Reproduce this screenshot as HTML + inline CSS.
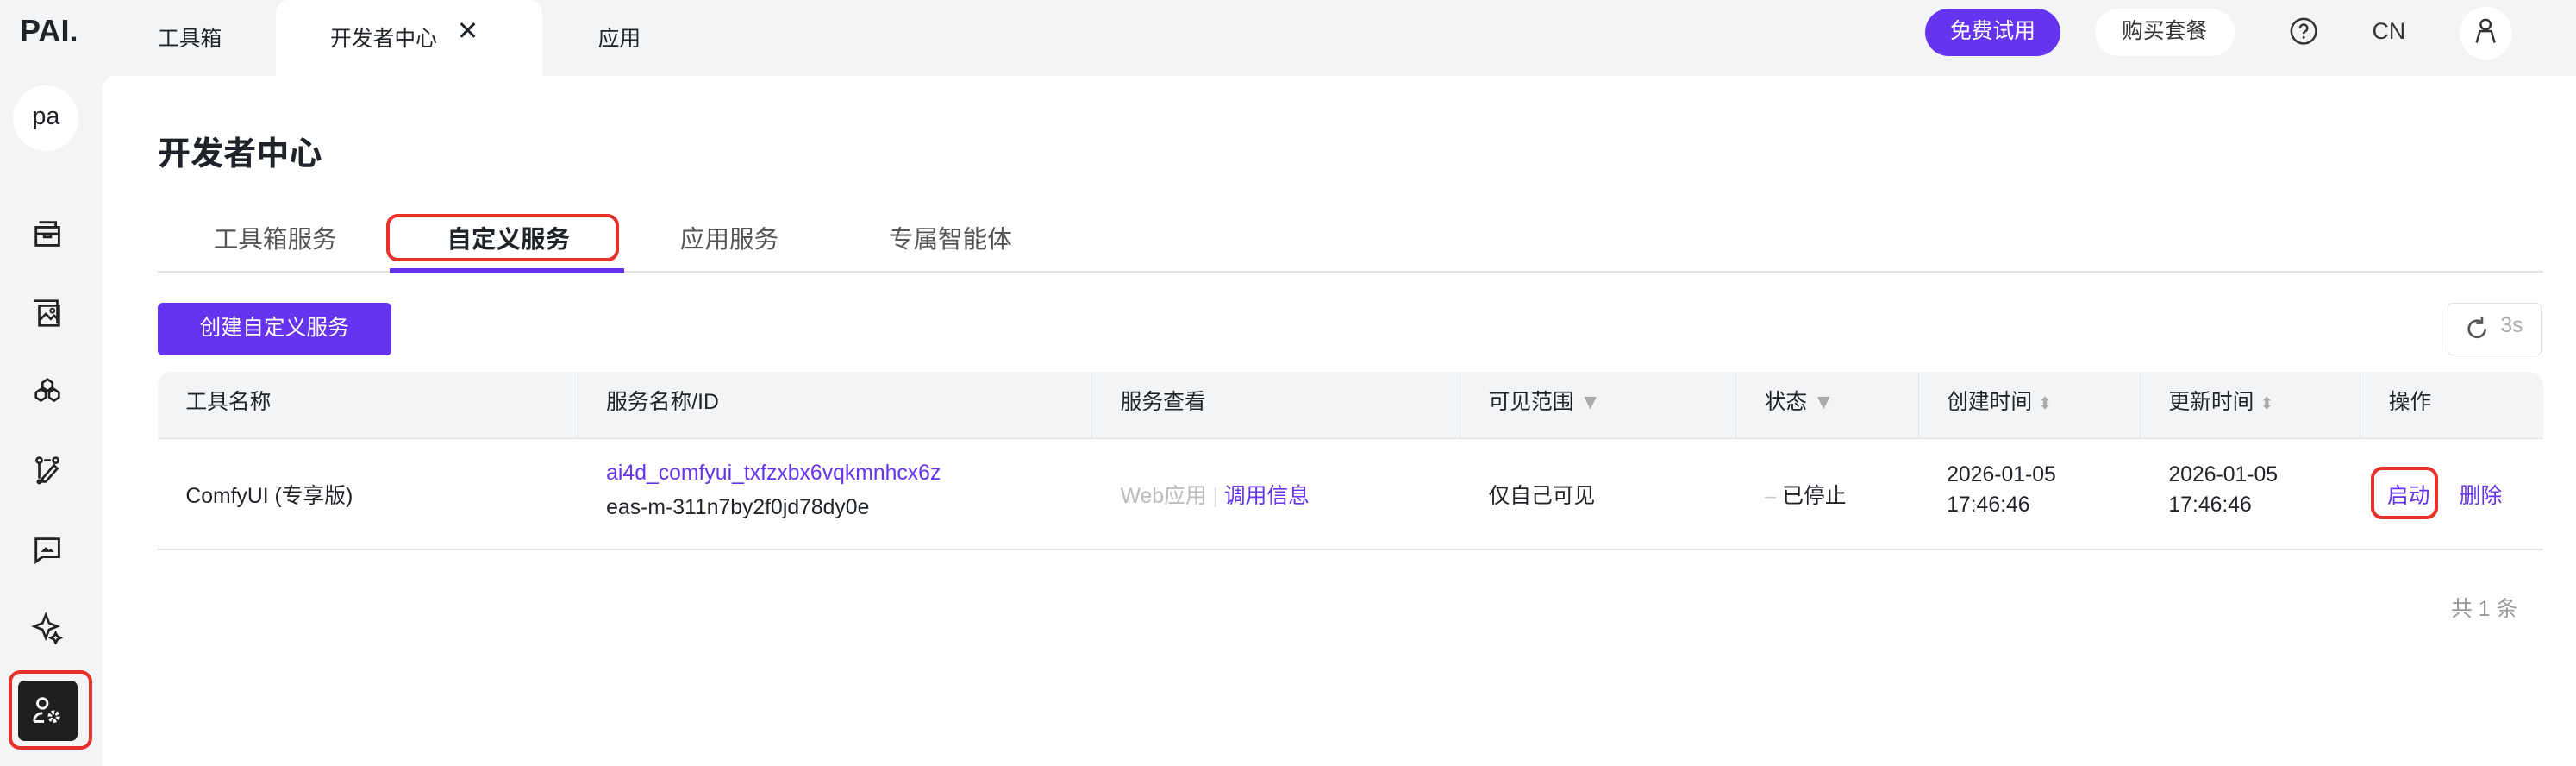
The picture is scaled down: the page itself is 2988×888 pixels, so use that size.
<!DOCTYPE html>
<html><head><meta charset="utf-8"><style>
*{margin:0;padding:0;box-sizing:border-box}
html,body{width:2988px;height:888px;overflow:hidden;background:#f3f4f6}
#w{zoom:1.9056;width:1568px;height:466px;position:relative;font-family:"Liberation Sans","Noto Sans CJK SC",sans-serif;color:#1f2329;font-size:13px}
.a{position:absolute;white-space:nowrap}
.main{position:absolute;left:62px;top:46px;right:0;bottom:0;background:#fff;border-top-left-radius:8px}
.ic{position:absolute;left:19px;width:20px;height:20px}
.th{position:absolute;top:226px;height:41px;line-height:38px;font-size:13px;color:#1f2329;padding-left:17px;border-right:1px solid #dde4ee}
.td{position:absolute;font-size:13px}
.pu{color:#6633ee}
</style></head><body><div id="w">
<div class="a" style="left:12px;top:8px;font-size:19px;font-weight:bold;color:#1f2329">PAI.</div>
<div class="a" style="left:96px;top:13px;font-size:13px">工具箱</div>
<div class="a" style="left:168px;top:0;width:162px;height:47px;background:#fff;border-radius:8px 8px 0 0"></div>
<div class="a" style="left:201px;top:13px">开发者中心</div>
<div class="a" style="left:278px;top:10px;font-size:16px">✕</div>
<div class="a" style="left:364px;top:13px">应用</div>
<div class="a" style="left:1172px;top:5px;width:82px;height:29px;border-radius:15px;background:#6633ee;color:#fff;text-align:center;line-height:28px">免费试用</div>
<div class="a" style="left:1275px;top:5px;width:85px;height:29px;border-radius:15px;background:#fff;text-align:center;line-height:28px;color:#333">购买套餐</div>
<svg class="a" style="left:1393px;top:10px" width="18" height="18" viewBox="0 0 18 18"><circle cx="9" cy="9" r="7.5" fill="none" stroke="#333" stroke-width="1.3"/><path d="M6.8 7.2a2.2 2.2 0 1 1 3 2c-.6.3-.8.7-.8 1.3" fill="none" stroke="#333" stroke-width="1.3"/><circle cx="9" cy="12.8" r=".8" fill="#333"/></svg>
<div class="a" style="left:1444px;top:11px;font-size:14px;color:#333">CN</div>
<div class="a" style="left:1497px;top:4px;width:32px;height:32px;border-radius:50%;background:#fff"></div>
<svg class="a" style="left:1504px;top:10px" width="18" height="18" viewBox="0 0 18 18"><circle cx="9" cy="5" r="3" fill="none" stroke="#333" stroke-width="1.3"/><path d="M3.5 16l2-7h7l2 7" fill="none" stroke="#333" stroke-width="1.3"/></svg>

<div class="a" style="left:8px;top:52px;width:40px;height:40px;border-radius:50%;background:#fff;text-align:center;line-height:38px;font-size:15px">pa</div>
<svg class="ic" style="top:132px" viewBox="0 0 20 20"><path d="M3 6h14v11H3zM5 3h10v3M3 10h14M8 10v2h4v-2" fill="none" stroke="#222" stroke-width="1.5"/></svg>
<svg class="ic" style="top:180px" viewBox="0 0 20 20"><path d="M2 3h14v14M5 6h12v12H5zM5 15l4-4 3 3 2-2 3 3" fill="none" stroke="#222" stroke-width="1.4"/><circle cx="13" cy="9" r="1.3" fill="none" stroke="#222"/></svg>
<svg class="ic" style="top:228px" viewBox="0 0 20 20"><path d="M10 3l3 2v3l-3 2-3-2V5zM6 9l3 2v3l-3 2-3-2v-3zM14 9l3 2v3l-3 2-3-2v-3z" fill="none" stroke="#222" stroke-width="1.4"/></svg>
<svg class="ic" style="top:276px" viewBox="0 0 20 20"><circle cx="5" cy="4" r="1.6" fill="none" stroke="#222" stroke-width="1.4"/><circle cx="5" cy="17" r="1.6" fill="#222"/><circle cx="15" cy="4" r="1.6" fill="none" stroke="#222" stroke-width="1.4"/><path d="M5 6v9M8 4h4M9 17l7-8-2-2-7 8v2z" fill="none" stroke="#222" stroke-width="1.4"/></svg>
<svg class="ic" style="top:324px" viewBox="0 0 20 20"><path d="M3 4h14v11H7l-4 3z" fill="none" stroke="#222" stroke-width="1.5"/><path d="M6 12l3-3 2 2 1-1 2 2z" fill="#222"/></svg>
<svg class="ic" style="top:372px" viewBox="0 0 20 20"><path d="M9 2l2 5 5 2-5 2-2 5-2-5-5-2 5-2zM15 13l1 2 2 1-2 1-1 2-1-2-2-1 2-1z" fill="none" stroke="#222" stroke-width="1.4"/></svg>
<div class="a" style="left:5px;top:408px;width:51px;height:48px;border:2.5px solid #e8302a;border-radius:7px"></div>
<div class="a" style="left:11px;top:414px;width:36px;height:37px;background:#1f1f1f;border-radius:4px"></div>
<svg class="a" style="left:18px;top:422px" width="22" height="22" viewBox="0 0 22 22"><circle cx="8" cy="6" r="3" fill="none" stroke="#fff" stroke-width="1.5"/><path d="M3 17c0-3 2-5 5-5M3 17h6" fill="none" stroke="#fff" stroke-width="1.5"/><circle cx="15" cy="14" r="2.5" fill="none" stroke="#fff" stroke-width="2.5" stroke-dasharray="1.6 1"/><circle cx="15" cy="14" r="1" fill="#1f1f1f"/></svg>

<div class="main"></div>
<div class="a" style="left:96px;top:77px;font-size:20px;font-weight:bold">开发者中心</div>
<div class="a" style="left:130px;top:134px;font-size:15px;color:#555">工具箱服务</div>
<div class="a" style="left:272px;top:134px;font-size:15px;font-weight:bold">自定义服务</div>
<div class="a" style="left:414px;top:134px;font-size:15px;color:#555">应用服务</div>
<div class="a" style="left:541px;top:134px;font-size:15px;color:#555">专属智能体</div>
<div class="a" style="left:96px;top:165px;width:1452px;height:1px;background:#dfe1e6"></div>
<div class="a" style="left:237px;top:163px;width:143px;height:3px;background:#6633ee"></div>
<div class="a" style="left:235px;top:130px;width:142px;height:29px;border:2.5px solid #e8302a;border-radius:7px"></div>
<div class="a" style="left:96px;top:184px;width:142px;height:32px;background:#6633ee;border-radius:3px;color:#fff;text-align:center;line-height:31px">创建自定义服务</div>
<div class="a" style="left:1490px;top:184px;width:57px;height:32px;border:1px solid #dfe1e6;border-radius:3px"></div>
<svg class="a" style="left:1500px;top:192px" width="16" height="16" viewBox="0 0 16 16"><path d="M13 8a5 5 0 1 1-2-4M11 1v3.5h-3.5" fill="none" stroke="#555" stroke-width="1.4"/></svg>
<div class="a" style="left:1522px;top:191px;color:#aaa">3s</div>

<div class="a" style="left:96px;top:226px;width:1452px;height:41px;background:#f3f4f6;border-radius:8px 8px 0 0;border-bottom:1px solid #dfe1e6"></div>
<div class="th" style="left:96px;width:256px">工具名称</div>
<div class="th" style="left:352px;width:313px">服务名称/ID</div>
<div class="th" style="left:665px;width:224px">服务查看</div>
<div class="th" style="left:889px;width:168px">可见范围 <span style="color:#aaa">▼</span></div>
<div class="th" style="left:1057px;width:111px">状态 <span style="color:#aaa">▼</span></div>
<div class="th" style="left:1168px;width:135px">创建时间 <span style="color:#aaa;font-size:10px">⬍</span></div>
<div class="th" style="left:1303px;width:134px">更新时间 <span style="color:#aaa;font-size:10px">⬍</span></div>
<div class="th" style="left:1437px;width:111px;border:0">操作</div>
<div class="a" style="left:96px;top:334px;width:1452px;height:1px;background:#dfe1e6"></div>
<div class="td a" style="left:113px;top:291px">ComfyUI (专享版)</div>
<div class="td a pu" style="left:369px;top:281px">ai4d_comfyui_txfzxbx6vqkmnhcx6z</div>
<div class="td a" style="left:369px;top:302px">eas-m-311n7by2f0jd78dy0e</div>
<div class="td a" style="left:682px;top:291px;color:#bbb">Web应用 <span style="color:#ddd">|</span> <span class="pu">调用信息</span></div>
<div class="td a" style="left:906px;top:291px">仅自己可见</div>
<div class="td a" style="left:1074px;top:291px"><span style="color:#ccc">–</span> 已停止</div>
<div class="td a" style="left:1185px;top:282px">2026-01-05</div>
<div class="td a" style="left:1185px;top:300px">17:46:46</div>
<div class="td a" style="left:1320px;top:282px">2026-01-05</div>
<div class="td a" style="left:1320px;top:300px">17:46:46</div>
<div class="td a pu" style="left:1453px;top:291px">启动</div>
<div class="a" style="left:1443px;top:284px;width:41px;height:32px;border:2.5px solid #e8302a;border-radius:7px"></div>
<div class="td a pu" style="left:1497px;top:291px">删除</div>
<div class="td a" style="left:1492px;top:360px;color:#999">共 1 条</div>
</div></body></html>
